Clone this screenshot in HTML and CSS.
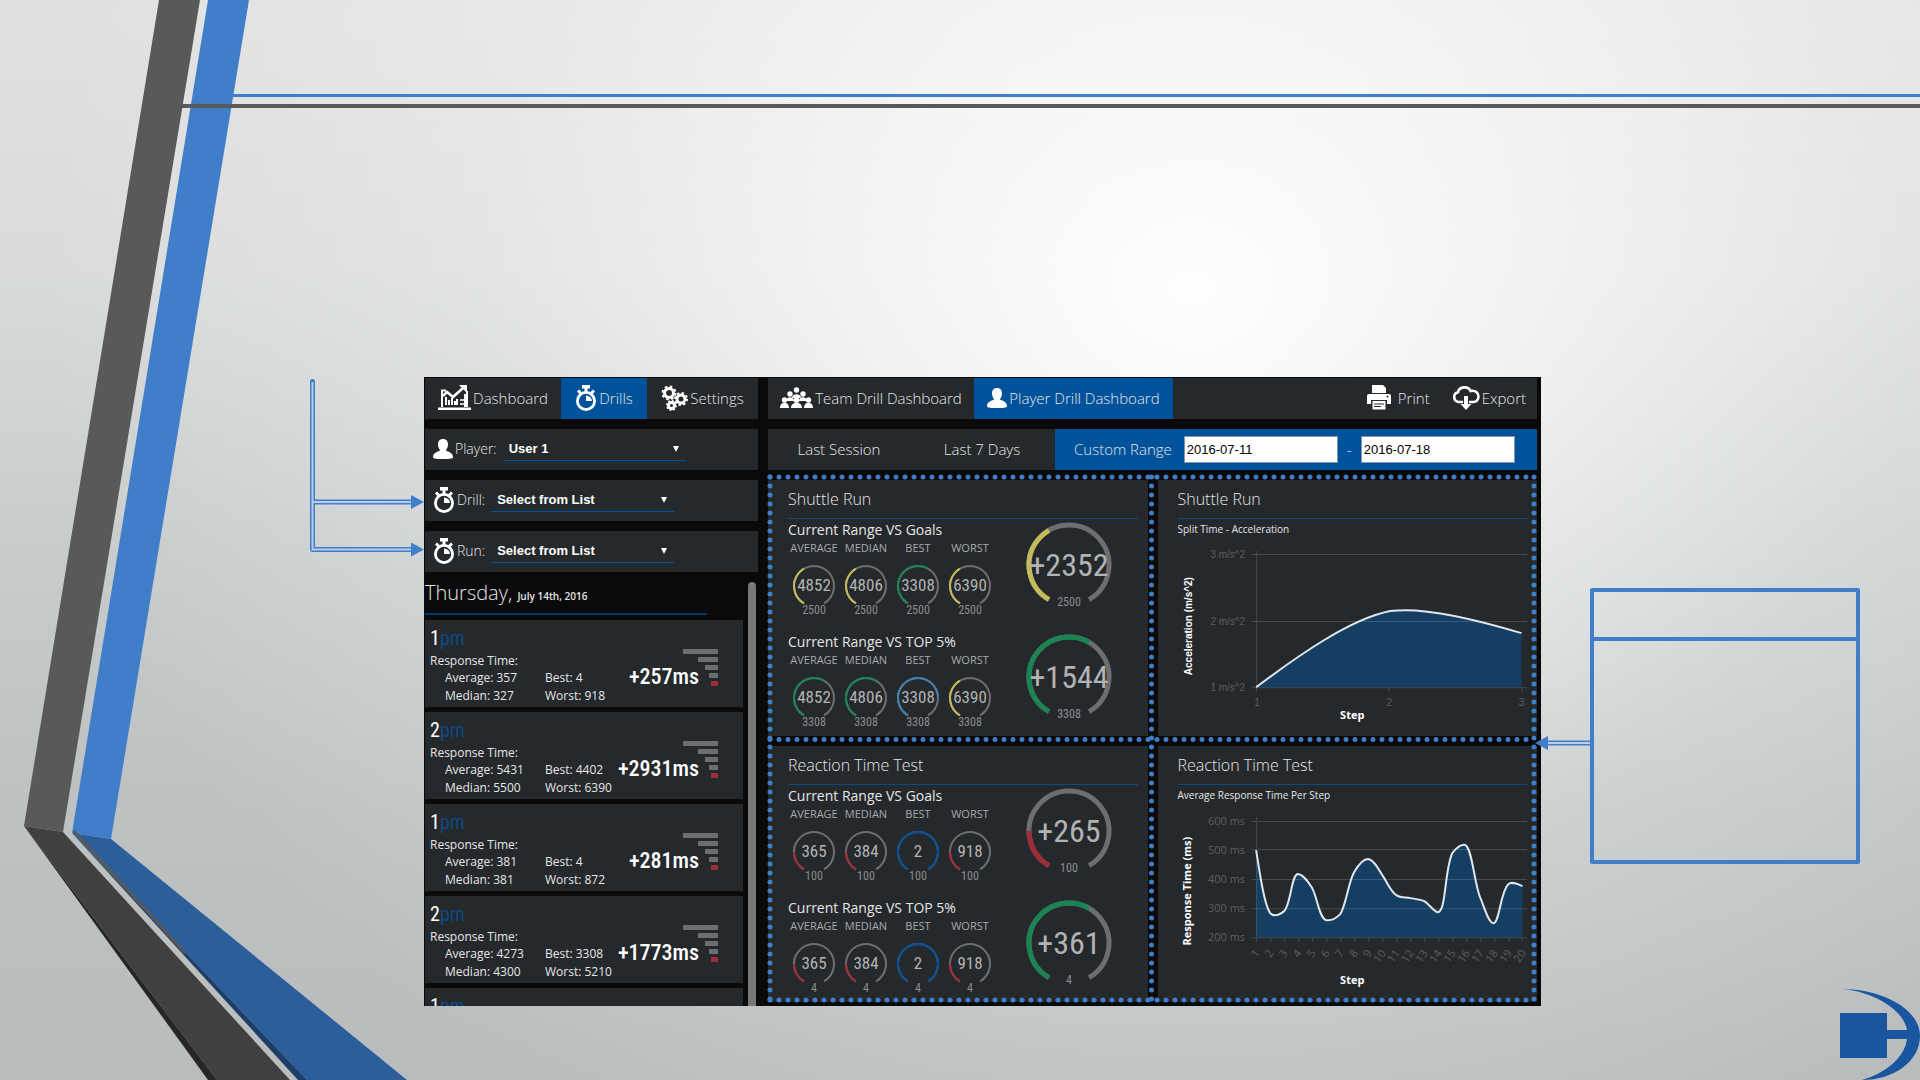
FILE: index.html
```
<!DOCTYPE html>
<html lang="en">
<head>
<meta charset="utf-8">
<title>Player Drill Dashboard</title>
<link rel="stylesheet" href="styles.css">
</head>
<body>
<svg class="defs" aria-hidden="true">
  <symbol id="watch" viewBox="0 0 22 26"><g fill="none" stroke="currentColor"><circle cx="11" cy="16" r="8.6" stroke-width="2.8"/><path d="M11 3v4M3 5.500l3 3M19 5.500l-3 3" stroke-width="3"/></g><path d="M7 0h8v3.500H7zM11 10.500V16h6a6 6 0 0 0-6-5.500z" fill="currentColor"/></symbol>
  <symbol id="person" viewBox="0 0 20 20"><path d="M10 0c-3.500 0-5 2.600-5 5.200 0 2.500 1 4.800 2.200 6C6.500 12.500 0 12.800 0 18c0 1.400 1.500 2 10 2s10-.6 10-2c0-5.200-6.500-5.500-7.200-6.800C14 10 15 7.700 15 5.200 15 2.600 13.500 0 10 0z" fill="currentColor"/></symbol>
  <symbol id="arc-s" viewBox="0 0 52 54" overflow="visible"><path d="M16 40.300A20 20 0 1 1 36 40.300" pathLength="5"/></symbol>
  <symbol id="arc-l" viewBox="0 0 100 98" overflow="visible"><path d="M30 80.600A40 40 0 1 1 70 80.600" pathLength="5"/></symbol>
</svg>

<div class="slide">
  <svg class="stripes" viewBox="0 0 1920 1080" preserveAspectRatio="none" aria-hidden="true">
    <path d="M208 0h41L111 839l-39-6z" fill="#407ec9"/>
    <path d="M159 0h41L63 832l-39-6z" fill="#595959"/>
    <path d="M24 826l39 6 227 248h-73z" fill="#404040"/>
    <path d="M24 826l193 254h-9z" fill="#262626"/>
    <path d="M72 833l39 6 296 241H307z" fill="#2b5e9b"/>
    <path d="M72 833l235 247h-9z" fill="#1d3f67"/>
    <path d="M74 831l111 122" stroke="#595959" stroke-width="3"/>
    <path d="M233 94h1687v3H233z" fill="#407ec9"/>
    <path d="M182 104h1738v4H181z" fill="#595959"/>
  </svg>

  <svg class="links-left" viewBox="0 0 114 172" aria-hidden="true">
    <path d="M2.500 1.500v168H102M2.500 122H102" fill="none" stroke="#407ec9" stroke-width="5" stroke-linejoin="round" stroke-linecap="round"/>
    <path d="M2.500 2v167.500H101M3 122H101" fill="none" stroke="#b9cde6" stroke-width="2"/>
    <path d="M101 115l13 7-13 7zM101 162.500l13 7-13 7z" fill="#407ec9"/>
  </svg>

  <main class="app">
    <section class="left">
      <nav class="bar tabs">
        <a href="#dashboard"><svg width="33" height="26" viewBox="0 0 33 26" fill="none" stroke="#fff"><path d="M8 5.500H4V22M27 9v13M29 6v16" stroke-width="2"/><path d="M0 22.500h33v2.500H0z" fill="#fff" stroke="none"/><path d="M5 11l4-4 6 5 10-9" stroke-width="2.500"/><path d="M21 0h8v8z" fill="#fff" stroke="none"/><path d="M8 12v8M11 15v5M14 13v7M17 16v4M19 14v6" stroke-width="2"/><path d="M22 15h4M22 19h4" stroke-width="1.500"/></svg>Dashboard</a>
        <a href="#drills" class="on"><svg width="22" height="26"><use href="#watch"/></svg><span>Drills</span></a>
        <a href="#settings"><svg width="27" height="26" viewBox="0 0 27 26" fill="none" stroke="#fff"><g stroke-width="3"><circle cx="8" cy="8" r="4.500"/><circle cx="20" cy="14" r="4"/><circle cx="10.500" cy="20.500" r="3"/></g><g stroke-width="2"><circle cx="8" cy="8" r="6.500" stroke-dasharray="2.600 2.500"/><circle cx="20" cy="14" r="6" stroke-dasharray="2.300 2.400"/><circle cx="10.500" cy="20.500" r="4.500" stroke-dasharray="1.800 1.700"/></g></svg>Settings</a>
      </nav>
      <div class="bar field"><svg width="20" height="20"><use href="#person"/></svg><label for="player">Player:</label>
        <span class="pick"><select id="player"><option>User 1</option></select></span></div>
      <div class="bar field"><svg width="22" height="26"><use href="#watch"/></svg><label for="drill">Drill:</label>
        <span class="pick"><select id="drill"><option>Select from List</option></select></span></div>
      <div class="bar field"><svg width="22" height="26"><use href="#watch"/></svg><label for="run">Run:</label>
        <span class="pick"><select id="run"><option>Select from List</option></select></span></div>

      <div class="history">
        <div class="runs">
          <h2 class="day">Thursday, <small>July 14th, 2016</small></h2>
          <article class="run"><div class="when">1<i>pm</i></div><p>Response Time:</p><dl><dd>Average: 357</dd><dd>Best: 4</dd><dd>Median: 327</dd><dd>Worst: 918</dd></dl><strong>+257ms</strong><div class="rank"><b></b><b></b><b></b><b></b><b></b></div></article>
          <article class="run"><div class="when">2<i>pm</i></div><p>Response Time:</p><dl><dd>Average: 5431</dd><dd>Best: 4402</dd><dd>Median: 5500</dd><dd>Worst: 6390</dd></dl><strong>+2931ms</strong><div class="rank"><b></b><b></b><b></b><b></b><b></b></div></article>
          <article class="run"><div class="when">1<i>pm</i></div><p>Response Time:</p><dl><dd>Average: 381</dd><dd>Best: 4</dd><dd>Median: 381</dd><dd>Worst: 872</dd></dl><strong>+281ms</strong><div class="rank"><b></b><b></b><b></b><b></b><b></b></div></article>
          <article class="run"><div class="when">2<i>pm</i></div><p>Response Time:</p><dl><dd>Average: 4273</dd><dd>Best: 3308</dd><dd>Median: 4300</dd><dd>Worst: 5210</dd></dl><strong>+1773ms</strong><div class="rank"><b></b><b></b><b></b><b></b><b></b></div></article>
          <article class="run"><div class="when">1<i>pm</i></div></article>
        </div>
        <div class="thumb"></div>
      </div>
    </section>

    <section class="right">
      <nav class="bar views">
        <a href="#team"><svg width="33" height="21" viewBox="0 0 33 21" fill="#fff"><circle cx="16.500" cy="3" r="2.700"/><circle cx="10" cy="7" r="2.700"/><circle cx="23" cy="7" r="2.700"/><path d="M12 11c0-5 9-5 9 0zM6 14c0-5 8-5 8 0zM19 14c0-5 8-5 8 0z"/><circle cx="4.500" cy="13" r="2.700"/><circle cx="16.500" cy="13" r="2.900"/><circle cx="28.500" cy="13" r="2.700"/><path d="M0 21c0-7 9-7 9 0zM11 21c0-7 11-7 11 0zM24 21c0-7 9-7 9 0z"/></svg>Team Drill Dashboard</a>
        <a href="#player-drill" class="on"><svg width="20" height="20"><use href="#person"/></svg>Player Drill Dashboard</a>
        <button type="button" class="print"><svg width="24" height="25" viewBox="0 0 24 25"><path d="M5 0h11l3 3v5H5zM2 9h20q2 0 2 2v8h-4v-4H4v4H0v-8q0-2 2-2z" fill="#fff"/><circle cx="20.500" cy="11.500" r="1" fill="#25292c"/><path d="M5.500 16h13v8.500h-13z" fill="#fff"/><path d="M7 19h10M7 21.500h7" stroke="#25292c"/></svg>Print</button>
        <button type="button"><svg width="28" height="24" viewBox="0 0 28 24"><path d="M11 16H6.500a5 5 0 0 1-.5-9.800C7 .500 16.500-.5 18.500 5c5-1 8 2 8 5.500S24 16 21.500 16H17" fill="none" stroke="#fff" stroke-width="2.600"/><path d="M12 10h4v8h3.500L14 24l-5.500-6H12z" fill="#fff"/></svg>Export</button>
      </nav>
      <div class="bar range">
        <a href="#last-session">Last Session</a>
        <a href="#last-week">Last 7 Days</a>
        <div class="custom on"><label for="from">Custom Range</label><input id="from" value="2016-07-11"><label for="to">-</label><input id="to" value="2016-07-18"></div>
      </div>

      <div class="board">
        <section class="panel">
          <h2>Shuttle Run</h2>
          <div class="compare">
            <div class="set"><h3>Current Range VS Goals</h3>
              <div class="gauges"><span>AVERAGE</span><span>MEDIAN</span><span>BEST</span><span>WORST</span>
                <svg viewBox="0 0 52 54"><use href="#arc-s"/><use href="#arc-s" class="l2"/><text x="26" y="28">4852</text><text x="26" y="51" class="goal">2500</text></svg>
                <svg viewBox="0 0 52 54"><use href="#arc-s"/><use href="#arc-s" class="l2"/><text x="26" y="28">4806</text><text x="26" y="51" class="goal">2500</text></svg>
                <svg viewBox="0 0 52 54"><use href="#arc-s"/><use href="#arc-s" class="l3"/><text x="26" y="28">3308</text><text x="26" y="51" class="goal">2500</text></svg>
                <svg viewBox="0 0 52 54"><use href="#arc-s"/><use href="#arc-s" class="l2"/><text x="26" y="28">6390</text><text x="26" y="51" class="goal">2500</text></svg>
              </div></div>
            <svg class="total" viewBox="0 0 100 98"><use href="#arc-l"/><use href="#arc-l" class="l2"/><text x="50" y="57">+2352</text><text x="50" y="87" class="goal">2500</text></svg>
          </div>
          <div class="compare">
            <div class="set"><h3>Current Range VS TOP 5%</h3>
              <div class="gauges"><span>AVERAGE</span><span>MEDIAN</span><span>BEST</span><span>WORST</span>
                <svg viewBox="0 0 52 54"><use href="#arc-s"/><use href="#arc-s" class="l3"/><text x="26" y="28">4852</text><text x="26" y="51" class="goal">3308</text></svg>
                <svg viewBox="0 0 52 54"><use href="#arc-s"/><use href="#arc-s" class="l3"/><text x="26" y="28">4806</text><text x="26" y="51" class="goal">3308</text></svg>
                <svg viewBox="0 0 52 54"><use href="#arc-s"/><use href="#arc-s" class="l4"/><text x="26" y="28">3308</text><text x="26" y="51" class="goal">3308</text></svg>
                <svg viewBox="0 0 52 54"><use href="#arc-s"/><use href="#arc-s" class="l2"/><text x="26" y="28">6390</text><text x="26" y="51" class="goal">3308</text></svg>
              </div></div>
            <svg class="total" viewBox="0 0 100 98"><use href="#arc-l"/><use href="#arc-l" class="l3"/><text x="50" y="57">+1544</text><text x="50" y="87" class="goal">3308</text></svg>
          </div>
        </section>

        <section class="panel">
          <h2>Shuttle Run</h2>
          <h4>Split Time - Acceleration</h4>
          <svg class="chart arial" viewBox="0 0 349 188">
            <path class="area" d="M78 146C122 113 172 78 212 70C240 66 290 76 343 92V146z"/>
            <path class="grid" d="M73 13.500H349M73 80.500H349M73 146.500H349M78.500 10V151M210.500 146V151M343.500 146V151"/>
            <path class="line" d="M78 146C122 113 172 78 212 70C240 66 290 76 343 92"/>
            <g class="ylab"><text x="67" y="17">3 m/s^2</text><text x="67" y="84">2 m/s^2</text><text x="67" y="150">1 m/s^2</text></g>
            <g class="xlab"><text x="79" y="165">1</text><text x="211" y="165">2</text><text x="343" y="165">3</text></g>
            <text class="axis step" x="174" y="178">Step</text>
            <text class="axis" transform="translate(14 85) rotate(-90)">Acceleration (m/s^2)</text>
          </svg>
        </section>

        <section class="panel">
          <h2>Reaction Time Test</h2>
          <div class="compare">
            <div class="set"><h3>Current Range VS Goals</h3>
              <div class="gauges"><span>AVERAGE</span><span>MEDIAN</span><span>BEST</span><span>WORST</span>
                <svg viewBox="0 0 52 54"><use href="#arc-s"/><use href="#arc-s" class="l1"/><text x="26" y="28">365</text><text x="26" y="51" class="goal">100</text></svg>
                <svg viewBox="0 0 52 54"><use href="#arc-s"/><use href="#arc-s" class="l1"/><text x="26" y="28">384</text><text x="26" y="51" class="goal">100</text></svg>
                <svg viewBox="0 0 52 54"><use href="#arc-s"/><use href="#arc-s" class="l5"/><text x="26" y="28">2</text><text x="26" y="51" class="goal">100</text></svg>
                <svg viewBox="0 0 52 54"><use href="#arc-s"/><use href="#arc-s" class="l1"/><text x="26" y="28">918</text><text x="26" y="51" class="goal">100</text></svg>
              </div></div>
            <svg class="total" viewBox="0 0 100 98"><use href="#arc-l"/><use href="#arc-l" class="l1"/><text x="50" y="57">+265</text><text x="50" y="87" class="goal">100</text></svg>
          </div>
          <div class="compare">
            <div class="set"><h3>Current Range VS TOP 5%</h3>
              <div class="gauges"><span>AVERAGE</span><span>MEDIAN</span><span>BEST</span><span>WORST</span>
                <svg viewBox="0 0 52 54"><use href="#arc-s"/><use href="#arc-s" class="l1"/><text x="26" y="28">365</text><text x="26" y="51" class="goal">4</text></svg>
                <svg viewBox="0 0 52 54"><use href="#arc-s"/><use href="#arc-s" class="l1"/><text x="26" y="28">384</text><text x="26" y="51" class="goal">4</text></svg>
                <svg viewBox="0 0 52 54"><use href="#arc-s"/><use href="#arc-s" class="l5"/><text x="26" y="28">2</text><text x="26" y="51" class="goal">4</text></svg>
                <svg viewBox="0 0 52 54"><use href="#arc-s"/><use href="#arc-s" class="l1"/><text x="26" y="28">918</text><text x="26" y="51" class="goal">4</text></svg>
              </div></div>
            <svg class="total" viewBox="0 0 100 98"><use href="#arc-l"/><use href="#arc-l" class="l3"/><text x="50" y="57">+361</text><text x="50" y="87" class="goal">4</text></svg>
          </div>
        </section>

        <section class="panel">
          <h2>Reaction Time Test</h2>
          <h4>Average Response Time Per Step</h4>
          <svg class="chart" viewBox="0 0 349 188">
            <path class="area" d="M78 43C82 68 86 97 92 106C96 110 101 108 106 104C113 97 113 67 120 67C126 68 130 75 134 81C139 90 141 111 148 113C154 114 158 111 162 107C168 98 170 75 176 65C180 58 185 52 190 52C196 53 200 62 204 68C209 75 212 84 218 88C222 91 227 90 232 91C237 92 241 92 246 94C251 97 254 103 259 105C268 106 266 62 274 46C278 40 284 37 287 38C294 42 296 78 302 91C306 100 310 116 315 116C321 116 322 84 330 77C333 74 339 77 344 79V130H78z"/>
            <path class="grid" d="M73 14.500H349M73 42.500H349M73 72.500H349M73 101.500H349M73 130.500H349M78.500 10V135M92.500 130v5M106.500 130v5M120.500 130v5M134.500 130v5M148.500 130v5M162.500 130v5M176.500 130v5M190.500 130v5M204.500 130v5M218.500 130v5M232.500 130v5M246.500 130v5M260.500 130v5M274.500 130v5M288.500 130v5M302.500 130v5M316.500 130v5M330.500 130v5M343.500 130v5"/>
            <path class="line" d="M78 43C82 68 86 97 92 106C96 110 101 108 106 104C113 97 113 67 120 67C126 68 130 75 134 81C139 90 141 111 148 113C154 114 158 111 162 107C168 98 170 75 176 65C180 58 185 52 190 52C196 53 200 62 204 68C209 75 212 84 218 88C222 91 227 90 232 91C237 92 241 92 246 94C251 97 254 103 259 105C268 106 266 62 274 46C278 40 284 37 287 38C294 42 296 78 302 91C306 100 310 116 315 116C321 116 322 84 330 77C333 74 339 77 344 79"/>
            <g class="ylab"><text x="67" y="18">600 ms</text><text x="67" y="47">500 ms</text><text x="67" y="76">400 ms</text><text x="67" y="105">300 ms</text><text x="67" y="134">200 ms</text></g>
            <g class="slant"><text transform="translate(82 146) rotate(-55)">1</text><text transform="translate(96 146) rotate(-55)">2</text><text transform="translate(110 146) rotate(-55)">3</text><text transform="translate(124 146) rotate(-55)">4</text><text transform="translate(138 146) rotate(-55)">5</text><text transform="translate(152 146) rotate(-55)">6</text><text transform="translate(166 146) rotate(-55)">7</text><text transform="translate(180 146) rotate(-55)">8</text><text transform="translate(194 146) rotate(-55)">9</text><text transform="translate(208 146) rotate(-55)">10</text><text transform="translate(222 146) rotate(-55)">11</text><text transform="translate(236 146) rotate(-55)">12</text><text transform="translate(250 146) rotate(-55)">13</text><text transform="translate(264 146) rotate(-55)">14</text><text transform="translate(278 146) rotate(-55)">15</text><text transform="translate(292 146) rotate(-55)">16</text><text transform="translate(306 146) rotate(-55)">17</text><text transform="translate(320 146) rotate(-55)">18</text><text transform="translate(334 146) rotate(-55)">19</text><text transform="translate(348 146) rotate(-55)">20</text></g>
            <text class="axis step" x="174" y="177">Step</text>
            <text class="axis" transform="translate(13 84) rotate(-90)">Response Time (ms)</text>
          </svg>
        </section>

        <svg class="dots" aria-hidden="true">
          <line x1="1" y1="1" x2="100%" y2="1"/><line x1="1" y1="50.300%" x2="100%" y2="50.300%"/><line x1="1" y1="100%" x2="100%" y2="100%"/>
          <line x1="1" y1="1" x2="1" y2="100%"/><line x1="50%" y1="1" x2="50%" y2="100%"/><line x1="100%" y1="1" x2="100%" y2="100%"/>
        </svg>
      </div>
    </section>
  </main>

  <aside class="note">
    <svg class="link-right" width="55" height="14" viewBox="0 0 55 14" aria-hidden="true"><path d="M12 7h43" stroke="#407ec9" stroke-width="5"/><path d="M12 7h43" stroke="#b9cde6" stroke-width="2"/><path d="M0 7l13-7v14z" fill="#407ec9"/></svg>
    <div class="box"><div class="box-head"></div></div>
  </aside>

  <svg class="logo" width="80" height="91" viewBox="0 0 80 91" aria-label="Logo"><path d="M0 24h47v17h20C64 22 36 3 2 0 42 0 80 20 80 47 80 72 54 91 22 91 46 84 65 68 67 50H47v19H0z" fill="#1a569f"/></svg>
</div>
</body>
</html>
```
FILE: styles.css
```
:root {
  --blue: #00529b;
  --accent: #407ec9;
  --panel: #25292c;
  --narrow: "Roboto Condensed", "Liberation Sans Narrow", "Arial Narrow", Roboto, sans-serif;
}
* { box-sizing: border-box; }
body {
  margin: 0;
  font-family: "Open Sans", sans-serif;
  color: #e6e6e6;
}
h2, h3, h4, p, dl, dd { margin: 0; font-weight: 400; }
a { color: inherit; text-decoration: none; }
.defs { position: absolute; width: 0; height: 0; }

.slide {
  position: relative;
  min-height: 100vh;
  display: grid;
  grid-template-columns: 424fr 1117fr 379fr;
  align-items: start;
  padding: 377px 0 74px;
  overflow: hidden;
  background:
    radial-gradient(ellipse 60% 90% at 62% 27%, rgba(255, 255, 255, .97) 0%, rgba(255, 255, 255, .65) 30%, rgba(255, 255, 255, .26) 62%, rgba(255, 255, 255, 0) 100%),
    linear-gradient(#e0e2e2 0%, #d9dbdb 25%, #c8cccc 50%, #bdc1c1 75%, #b8bcbc 100%);
}
.stripes { position: absolute; inset: 0; width: 100%; height: 100%; }
.links-left {
  position: relative;
  justify-self: end;
  width: 114px;
  margin-top: 3px;
  overflow: visible;
}
.logo { position: absolute; right: 0; bottom: 0; }

.app {
  position: relative;
  display: grid;
  grid-template-columns: 333fr 769fr;
  gap: 10px;
  padding: 1px 4px 4px 1px;
  background: #0a0a0a;
}
.left, .right { display: flex; flex-direction: column; gap: 10px; min-width: 0; }
.bar { height: 41px; display: flex; background: var(--panel); font-size: 15px; font-weight: 300; }
.on { background: var(--blue); }

.tabs { display: grid; grid-template-columns: 136fr 86fr 111fr; }
.tabs a, .views a, .views button { display: flex; align-items: center; justify-content: center; gap: 2px; padding-bottom: 2px; }
.tabs svg, .field svg { color: #fff; flex: none; }
.views svg { color: #fff; }
.views { display: grid; grid-template-columns: 206px 199px 1fr auto; }
.views button { border: 0; background: none; color: inherit; font: inherit; padding: 0 11px 2px; }
.views .print { justify-content: end; gap: 7px; }

.field { align-items: center; padding: 0 0 2px 8px; gap: 2px; font-size: 14px; }
.pick { position: relative; margin-left: 4px; }
.pick::after {
  content: "";
  position: absolute;
  right: 7px;
  top: 9px;
  border: 3px solid transparent;
  border-top: 6px solid #fff;
  border-bottom: 0;
}
.pick select {
  appearance: none;
  width: 183px;
  height: 24px;
  padding: 0 6px;
  border: 0;
  border-bottom: 1px solid var(--blue);
  background: none;
  color: #fff;
  font: bold 13px "Liberation Sans", sans-serif;
}

.history {
  flex: 1;
  contain: size;
  display: flex;
  justify-content: space-between;
  overflow: hidden;
  margin: -5px 0 -4px;
  padding-top: 5px;
}
.runs { width: 318px; display: flex; flex-direction: column; gap: 5px; }
.day {
  flex: none;
  width: 282px;
  height: 33px;
  line-height: 22px;
  font-size: 20px;
  font-weight: 300;
  border-bottom: 2px solid #003a6c;
  white-space: nowrap;
}
.day small { font-size: 10px; font-weight: 600; }
.thumb { width: 8px; margin-right: 2px; border-radius: 4px 4px 0 0; background: #777; }
.run {
  position: relative;
  flex: none;
  height: 87px;
  padding: 4px 5px;
  background: var(--panel);
  font-size: 12px;
  line-height: 17px;
}
.when { height: 28px; font: 20px/28px var(--narrow); color: #fff; }
.when i { font-style: normal; color: #0b4a85; }
.run dl { display: grid; grid-template-columns: 100px 1fr; row-gap: 1px; padding-left: 15px; }
.run strong {
  position: absolute;
  right: 44px;
  top: 40px;
  font: 500 22px/34px var(--narrow);
  color: #fff;
}
.rank { position: absolute; right: 25px; top: 29px; display: grid; gap: 3px; justify-items: end; }
.rank b { height: 5px; width: 35px; background: #6d6e71; }
.rank b:nth-child(2) { width: 20px; }
.rank b:nth-child(3) { width: 13px; }
.rank b:nth-child(4) { width: 9px; }
.rank b:nth-child(5) { width: 7px; background: #a02c37; }

.range { display: grid; grid-template-columns: 116fr 118fr 53fr 482fr; align-items: center; }
.range > a { text-align: center; padding-bottom: 1px; }
.range > a:nth-child(1) { grid-column: 1; padding-left: 26px; white-space: nowrap; }
.range > a:nth-child(2) { grid-column: 2 / 4; padding-left: 25px; }
.custom { align-self: stretch; display: flex; align-items: center; padding-left: 19px; gap: 9px; white-space: nowrap; }
.custom label { padding-bottom: 1px; }
.custom label:first-child { margin-right: 3px; }
.custom input {
  width: 154px;
  height: 27px;
  padding: 0 2px;
  border: 1px solid #8a94a6;
  background: #fff;
  color: #000;
  font: 13px "Liberation Sans", sans-serif;
}

.board {
  position: relative;
  display: grid;
  grid-template-columns: 1fr 1fr;
  gap: 10px;
}
.panel { min-height: 256px; padding: 0 10px 3px 20px; background: var(--panel); min-width: 0; }
.panel h2 { height: 39px; padding-top: 7px; font-size: 16px; line-height: 24px; font-weight: 300; border-bottom: 1px solid #0b4a85; }
.panel h3 { font-size: 14px; line-height: 22px; white-space: nowrap; }
.panel h4 { font-size: 10px; line-height: 20px; }
.compare { display: flex; gap: 23px; }
.compare + .compare { margin-top: 14px; }
.gauges { display: grid; grid-template-columns: repeat(4, 52px); justify-items: center; }
.gauges span { height: 22px; font-size: 11px; line-height: 14px; color: #a7a9ac; }
.gauges svg { width: 52px; height: 54px; }
.total { width: 100px; height: 98px; overflow: visible; }
.gauges use, .total use { fill: none; stroke: #6d6e71; stroke-width: 2; }
.total use { stroke-width: 5; }
.compare .l1 { stroke: #a02c37; stroke-dasharray: 1 5; }
.compare .l2 { stroke: #c5bb5b; stroke-dasharray: 2 5; }
.compare .l3 { stroke: #1a8552; stroke-dasharray: 3 5; }
.compare .l4 { stroke: #4080b0; stroke-dasharray: 4 5; }
.compare .l5 { stroke: #00529b; }
.compare text { fill: #b3b3b3; font: 17px var(--narrow); text-anchor: middle; }
.compare .total text { font-size: 32px; }
.compare .goal, .compare .total .goal { font-size: 12px; fill: #8c8c8c; }

.chart { display: block; width: 100%; height: auto; margin-top: 2px; }
.chart .area { fill: #143e62; }
.chart .grid { fill: none; stroke: #fff; stroke-opacity: .15; }
.chart .line { fill: none; stroke: #dfe6ee; stroke-width: 2; }
.chart text { fill: #5c5f61; font-size: 11px; }
.chart.arial text { font-family: "Liberation Sans", sans-serif; font-size: 10px; }
.chart .ylab text, .chart .slant text { text-anchor: end; }
.chart .xlab text, .chart .axis { text-anchor: middle; }
.chart .axis, .chart.arial .axis { fill: #fff; font-weight: 700; }
.chart.arial .step { font: 700 11px "Open Sans", sans-serif; }

.dots {
  position: absolute;
  left: 1px;
  top: -4px;
  width: calc(100% - 4px);
  height: calc(100% + 2px);
  overflow: visible;
}
.dots line { stroke: var(--accent); stroke-width: 5; stroke-linecap: round; stroke-dasharray: 0 9; }

.note {
  position: relative;
  padding: 211px 60px 0 49px;
}
.box { height: 276px; border: 4px solid var(--accent); border-radius: 2px; }
.box-head { height: 49px; border-bottom: 4px solid var(--accent); }
.link-right { position: absolute; left: -6px; top: 359px; }
```
